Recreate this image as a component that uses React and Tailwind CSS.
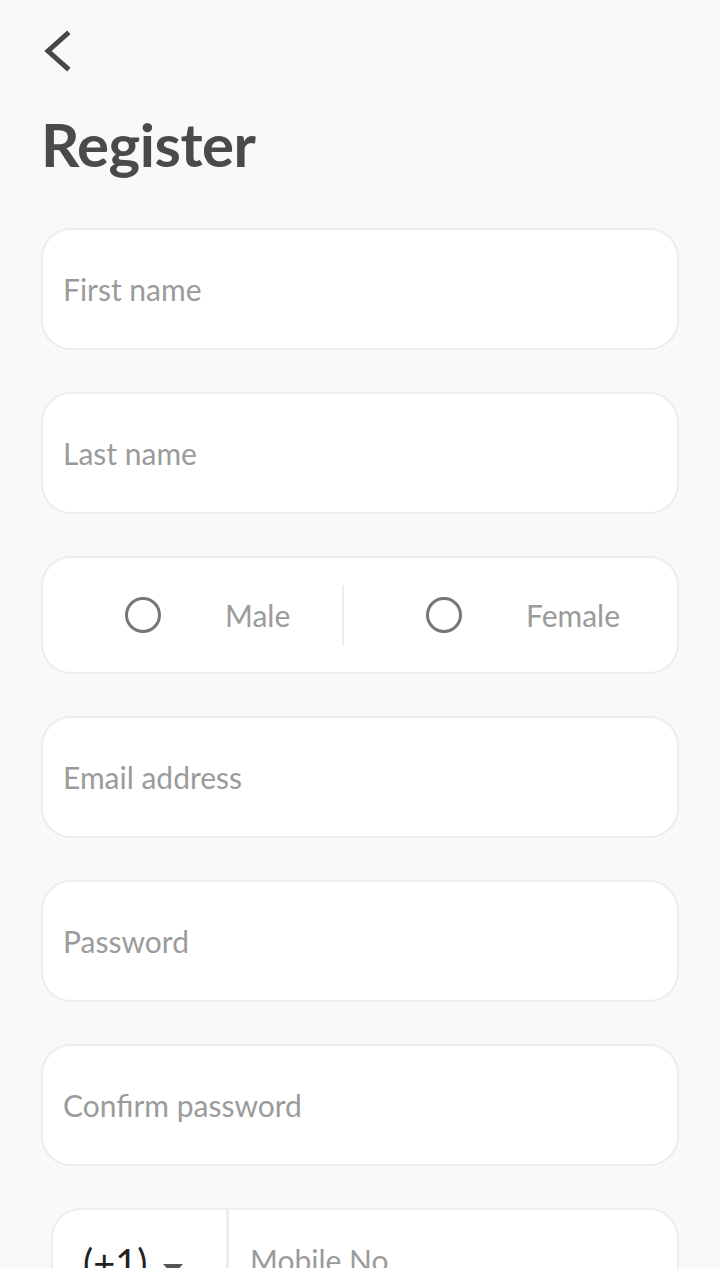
import React from 'react'

function Field({ placeholder }) {
  return (
    <div className="h-[122px] rounded-[30px] border-2 border-[#ededed] bg-white flex items-center px-[20px]">
      <span className="text-[30px] text-[#9b9b9b]">{placeholder}</span>
    </div>
  )
}

export default function App() {
  return (
    <div className="h-[1268px] overflow-hidden bg-[#f9f9f9]" style={{ fontFamily: 'Lato, "Noto Sans", sans-serif' }}>
      <div className="px-[41px] pt-[30px]">
        <svg width="40" height="42" viewBox="0 0 40 42" className="-ml-[2px]">
          <path d="M28 4 L9 21 L28 38" fill="none" stroke="#474747" strokeWidth="5" strokeLinecap="square" />
        </svg>
        <h1 className="mt-[42px] text-[60px] font-bold text-[#4a4a4a] leading-none tracking-[-0.5px]">Register</h1>
        <div className="mt-[54px] flex flex-col gap-[42px]">
          <Field placeholder="First name" />
          <Field placeholder="Last name" />
          <div className="h-[118px] rounded-[30px] border-2 border-[#ededed] bg-white flex items-center">
            <div className="w-[299px] flex items-center pl-[82px]">
              <span className="w-[36px] h-[36px] rounded-full border-[3px] border-[#767676]" />
              <span className="ml-[64px] text-[30px] text-[#9b9b9b]">Male</span>
            </div>
            <div className="w-[2px] h-[60px] bg-[#ededed]" />
            <div className="flex-1 flex items-center pl-[82px]">
              <span className="w-[36px] h-[36px] rounded-full border-[3px] border-[#767676]" />
              <span className="ml-[64px] text-[30px] text-[#9b9b9b]">Female</span>
            </div>
          </div>
          <Field placeholder="Email address" />
          <Field placeholder="Password" />
          <Field placeholder="Confirm password" />
          <div className="ml-[10px] h-[122px] rounded-[30px] border-2 border-[#ededed] bg-white flex items-stretch">
            <div className="w-[173px] flex items-start pt-[30px] pl-[30px] gap-[16px]">
              <span className="text-[38px] leading-[44px] text-[#222]">(+1)</span>
              <svg width="20" height="12" viewBox="0 0 20 12" className="mt-[24px]">
                <path d="M0 0 L20 0 L10 11 Z" fill="#555" />
              </svg>
            </div>
            <div className="w-[3px] bg-[#ededed]" />
            <div className="flex-1 flex items-start pt-[30px] pl-[21px]">
              <span className="text-[30px] leading-[40px] text-[#9b9b9b]">Mobile No.</span>
            </div>
          </div>
        </div>
      </div>
    </div>
  )
}
